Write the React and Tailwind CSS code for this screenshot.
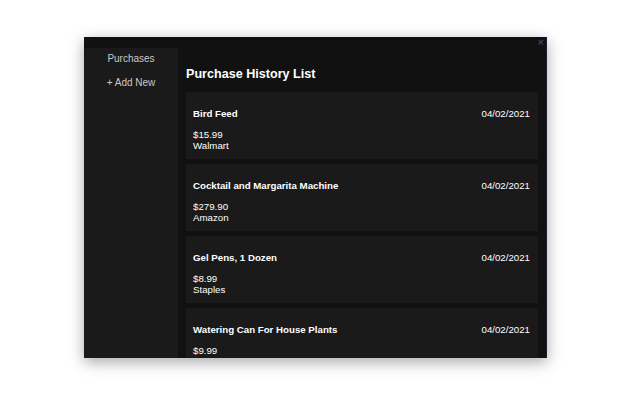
import React from 'react';

const items = [
  { name: 'Bird Feed', price: '$15.99', store: 'Walmart', date: '04/02/2021' },
  { name: 'Cocktail and Margarita Machine', price: '$279.90', store: 'Amazon', date: '04/02/2021' },
  { name: 'Gel Pens, 1 Dozen', price: '$8.99', store: 'Staples', date: '04/02/2021' },
  { name: 'Watering Can For House Plants', price: '$9.99', store: 'Home Depot', date: '04/02/2021' },
];

export default function App() {
  return (
    <div className="w-[640px] h-[400px] bg-white flex items-start pl-[84px] pt-[37px]" style={{ fontFamily: '"Liberation Sans", Arial, sans-serif' }}>
      <div className="w-[463px] h-[321px] bg-[#111111] flex flex-col overflow-hidden shadow-[0_4px_14px_rgba(0,0,0,0.35)] border-r border-[#1c1f3a]">
        <div className="h-[11px] flex justify-end pr-[2px] shrink-0">
          <span className="text-[#4a5578] text-[11px] leading-[11px]">×</span>
        </div>
        <div className="flex flex-1 min-h-0">
          <div className="w-[94px] bg-[#1a1a1a] flex flex-col items-center text-[10px] text-[#c8c8c8] pt-[5px] gap-[12px]">
            <span className="leading-[12px]">Purchases</span>
            <span className="leading-[12px]">+ Add New</span>
          </div>
          <div className="flex-1 pl-[8px] pr-[8px] overflow-hidden">
            <h1 className="text-white font-bold text-[12.6px] leading-[16px] mt-[18px] mb-[10px]">Purchase History List</h1>
            <div className="flex flex-col gap-[5px]">
              {items.map((it) => (
                <div key={it.name} className="bg-[#1a1a1a] h-[67px] shrink-0 pl-[7px] pr-[8px] pt-[16px] text-[9.7px] text-white">
                  <div className="flex justify-between leading-[12px]">
                    <span className="font-bold">{it.name}</span>
                    <span>{it.date}</span>
                  </div>
                  <div className="mt-[9px] leading-[11px]">{it.price}</div>
                  <div className="leading-[11px]">{it.store}</div>
                </div>
              ))}
            </div>
          </div>
        </div>
      </div>
    </div>
  );
}
